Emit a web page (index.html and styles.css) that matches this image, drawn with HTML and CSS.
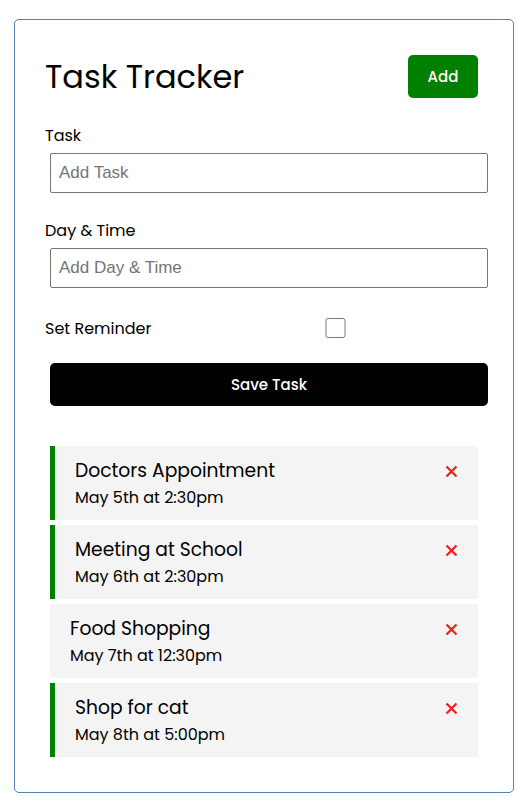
FILE: index.html
```html
<!DOCTYPE html>
<html lang="en">
<head>
<meta charset="utf-8">
<title>Task Tracker</title>
<link rel="stylesheet" href="styles.css">
</head>
<body>
<div class="container">
  <header class="header">
    <h1>Task Tracker</h1>
    <button class="btn btn-add">Add</button>
  </header>
  <form class="add-form">
    <div class="form-control">
      <label>Task</label>
      <input type="text" placeholder="Add Task">
    </div>
    <div class="form-control">
      <label>Day &amp; Time</label>
      <input type="text" placeholder="Add Day &amp; Time">
    </div>
    <div class="form-control form-control-check">
      <label>Set Reminder</label>
      <input type="checkbox">
    </div>
    <button type="button" class="btn btn-block">Save Task</button>
  </form>
  <div class="tasks">
    <div class="task reminder">
      <h3>Doctors Appointment <svg class="x" viewBox="0 0 13 13"><path d="M1.5 1.5L11.5 11.5M11.5 1.5L1.5 11.5"/></svg></h3>
      <p>May 5th at 2:30pm</p>
    </div>
    <div class="task reminder">
      <h3>Meeting at School <svg class="x" viewBox="0 0 13 13"><path d="M1.5 1.5L11.5 11.5M11.5 1.5L1.5 11.5"/></svg></h3>
      <p>May 6th at 2:30pm</p>
    </div>
    <div class="task">
      <h3>Food Shopping <svg class="x" viewBox="0 0 13 13"><path d="M1.5 1.5L11.5 11.5M11.5 1.5L1.5 11.5"/></svg></h3>
      <p>May 7th at 12:30pm</p>
    </div>
    <div class="task reminder">
      <h3>Shop for cat <svg class="x" viewBox="0 0 13 13"><path d="M1.5 1.5L11.5 11.5M11.5 1.5L1.5 11.5"/></svg></h3>
      <p>May 8th at 5:00pm</p>
    </div>
  </div>
</div>
</body>
</html>
```
FILE: styles.css
```css
* {
  box-sizing: border-box;
  margin: 0;
  padding: 0;
}

body {
  font-family: "Poppins", "Open Sans", sans-serif;
  background: #fff;
  color: #000;
}

.container {
  width: 500px;
  margin: 19px 18px 10px 14px;
  border: 1px solid #5382b0;
  border-radius: 5px;
  padding: 30px;
  overflow: auto;
}

.header {
  display: flex;
  justify-content: space-between;
  align-items: center;
  margin-bottom: 20px;
}

.header h1 {
  font-size: 32px;
  font-weight: 400;
  line-height: 48px;
}

.btn {
  display: inline-block;
  background: #000;
  color: #fff;
  border: none;
  padding: 10px 20px;
  margin: 5px;
  border-radius: 5px;
  font-family: inherit;
  font-size: 15px;
  font-weight: 500;
  line-height: 23px;
  cursor: pointer;
}

.btn-add {
  background: #008000;
  width: 70px;
  height: 43px;
  padding: 0;
}

.btn-block {
  display: block;
  width: 100%;
  height: 43px;
}

.add-form {
  margin-bottom: 40px;
}

.form-control {
  margin: 20px 0;
}

.form-control label {
  display: block;
  font-size: 16px;
  line-height: 25px;
}

.form-control input {
  width: 100%;
  height: 40px;
  margin: 5px;
  padding: 3px 8px;
  font-size: 17px;
  font-family: "Liberation Sans", Arial, sans-serif;
  border: 1px solid #767676;
  border-radius: 2px;
}

.form-control input::placeholder {
  color: #757575;
}

.form-control-check {
  display: flex;
  align-items: center;
  justify-content: space-between;
}

.form-control-check label {
  flex: 1;
}

.form-control-check input {
  flex: 2;
  height: 20px;
}

.form-control:first-child {
  margin-top: 0;
}

.task {
  background: #f4f4f4;
  margin: 5px;
  padding: 11px 20px 9px;
}

.task.reminder {
  border-left: 5px solid #008000;
}

.task h3 {
  display: flex;
  align-items: center;
  justify-content: space-between;
  font-size: 18.72px;
  font-weight: 400;
  line-height: 28px;
}

.task p {
  font-size: 16px;
  line-height: 26px;
}

.x {
  width: 13px;
  height: 13px;
  fill: none;
  stroke: #e8261c;
  stroke-width: 2.3;
}
```
